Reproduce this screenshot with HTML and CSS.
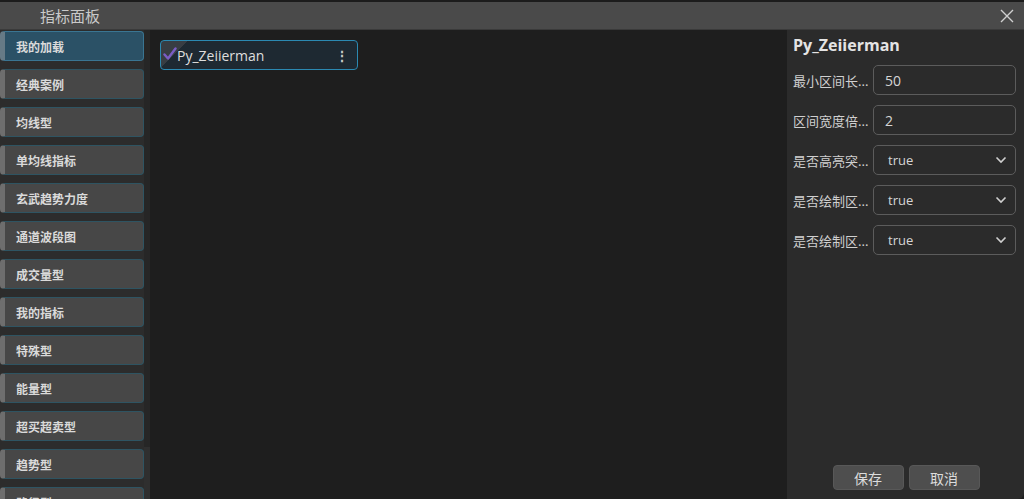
FILE: index.html
```html
<!DOCTYPE html>
<html lang="zh">
<head>
<meta charset="utf-8">
<link rel="stylesheet" href="styles.css">
</head>
<body>
<div class="topstrip"></div>
<div class="dialog">
  <header class="titlebar">
    <span class="title">指标面板</span>
    <button class="close" aria-label="关闭">
      <svg width="14" height="14" viewBox="0 0 14 14"><path d="M1 1L13 13M13 1L1 13" stroke="#d0d0d0" stroke-width="1.4" fill="none"/></svg>
    </button>
  </header>
  <div class="body">
    <nav class="sidebar">
      <div class="items">
        <div class="item active">我的加载</div>
        <div class="item">经典案例</div>
        <div class="item">均线型</div>
        <div class="item">单均线指标</div>
        <div class="item">玄武趋势力度</div>
        <div class="item">通道波段图</div>
        <div class="item">成交量型</div>
        <div class="item">我的指标</div>
        <div class="item">特殊型</div>
        <div class="item">能量型</div>
        <div class="item">超买超卖型</div>
        <div class="item">趋势型</div>
        <div class="item">路径型</div>
      </div>
      <div class="scrolltrack"><div class="thumb"></div></div>
    </nav>
    <main class="main">
      <div class="card">
        <svg class="check" width="14" height="14" viewBox="0 0 14 14"><path d="M1.5 7.5L5 11.5L12.5 1.5" stroke="#7a5cc4" stroke-width="2.4" fill="none" stroke-linecap="round" stroke-linejoin="round"/></svg>
        <span class="cardname">Py_Zeiierman</span>
        <span class="kebab">⋮</span>
      </div>
    </main>
    <aside class="panel">
      <h2 class="ptitle">Py_Zeiierman</h2>
      <div class="row"><label class="lbl">最小区间长...</label><div class="field">50</div></div>
      <div class="row"><label class="lbl">区间宽度倍...</label><div class="field">2</div></div>
      <div class="row"><label class="lbl">是否高亮突...</label><div class="field select"><span>true</span><svg width="12" height="8" viewBox="0 0 12 8"><path d="M1.5 1.5L6 6L10.5 1.5" stroke="#d0d0d0" stroke-width="1.6" fill="none"/></svg></div></div>
      <div class="row"><label class="lbl">是否绘制区...</label><div class="field select"><span>true</span><svg width="12" height="8" viewBox="0 0 12 8"><path d="M1.5 1.5L6 6L10.5 1.5" stroke="#d0d0d0" stroke-width="1.6" fill="none"/></svg></div></div>
      <div class="row"><label class="lbl">是否绘制区...</label><div class="field select"><span>true</span><svg width="12" height="8" viewBox="0 0 12 8"><path d="M1.5 1.5L6 6L10.5 1.5" stroke="#d0d0d0" stroke-width="1.6" fill="none"/></svg></div></div>
      <div class="buttons">
        <button class="btn">保存</button>
        <button class="btn">取消</button>
      </div>
    </aside>
  </div>
</div>
</body>
</html>
```
FILE: styles.css
```css
* { box-sizing: border-box; }
html, body { margin: 0; padding: 0; height: 100%; }
body {
  background: #1e1e1e;
  font-family: "Noto Sans", "Noto Sans CJK SC", sans-serif;
  color: #dcdcdc;
  overflow: hidden;
  display: flex;
  flex-direction: column;
}
.topstrip { height: 2px; background: #1c1c1c; flex: none; }
.dialog { flex: 1; display: flex; flex-direction: column; min-height: 0; }
.titlebar {
  height: 28px; flex: none;
  background: #4a4a4a;
  display: flex; align-items: center;
  padding-left: 40px; padding-right: 8px;
  border-bottom: 1px solid #3a3a3a;
}
.title { font-family: "Noto Sans CJK SC", sans-serif; font-size: 15px; color: #c9c9c9; flex: 1; }
.close { background: none; border: 0; padding: 0; width: 16px; height: 16px; display: flex; align-items: center; justify-content: center; margin-right: 1px; }
.body { flex: 1; display: flex; min-height: 0; }
.sidebar { width: 150px; flex: none; background: #2c2c2c; display: flex; overflow: hidden; }
.items { width: 144px; display: flex; flex-direction: column; gap: 8px; padding-top: 1px; }
.item {
  height: 30px; flex: none;
  background: #474747;
  border: 1px solid #2e5462;
  border-left: 5px solid #6e6e6e;
  border-radius: 4px;
  font-family: "Noto Sans CJK SC", sans-serif;
  font-weight: 700; font-size: 12px; color: #dadada;
  display: flex; align-items: center; padding-left: 11px;
}
.item.active { background: #2b5166; border-color: #3a7592; border-left-color: #667a86; }
.scrolltrack { width: 6px; background: #262626; display: flex; flex-direction: column; justify-content: flex-end; }
.thumb { height: 52px; background: #2f2f2f; }
.main { flex: 1; background: #1e1e1e; padding: 10px 10px 0 10px; }
.card {
  width: 198px; height: 30px;
  border: 1.5px solid #2b89b2; border-radius: 4px;
  background: linear-gradient(135deg, #383d43 0 19px, transparent 19px), #1e2932;
  display: flex; align-items: center; padding-left: 2px; padding-right: 8px;
}
.check { flex: none; margin-right: 0; margin-top: -3px; }
.cardname { font-family: "Open Sans", sans-serif; font-size: 14px; color: #dedede; flex: 1; }
.kebab { font-size: 14px; color: #c8c8c8; font-weight: 700; }
.panel {
  width: 237px; flex: none; background: #2b2b2b;
  display: flex; flex-direction: column; padding: 3px 8px 9px 6px;
  border-bottom-right-radius: 6px;
}
.ptitle { margin: 0 0 8px 0; font-family: "Open Sans", sans-serif; font-weight: 700; font-size: 16px; color: #e4e4e4; height: 24px; line-height: 24px; }
.row { display: flex; align-items: center; height: 30px; margin-bottom: 10px; }
.lbl {
  width: 80px; flex: none; font-family: "Noto Sans", "Noto Sans CJK SC", sans-serif; font-size: 13px; color: #d0d0d0;
  white-space: nowrap; letter-spacing: 0;
}
.field {
  flex: 1; height: 30px; border: 1px solid #5c5c5c; border-radius: 5px; background: #2b2b2b;
  display: flex; align-items: center; padding-left: 11px; padding-right: 8px;
  font-family: "Open Sans", sans-serif; font-size: 14px; color: #d6d6d6;
}
.field.select { padding-left: 14px; font-size: 13px; justify-content: space-between; }
.buttons { margin-top: auto; display: flex; justify-content: center; gap: 5px; padding-left: 3px; }
.btn {
  width: 71px; height: 25px; border: 1px solid #585858; border-radius: 4px; background: #4e4e4e;
  font-family: "Noto Sans CJK SC", sans-serif; font-size: 14px; color: #dcdcdc; padding: 0;
}
```
